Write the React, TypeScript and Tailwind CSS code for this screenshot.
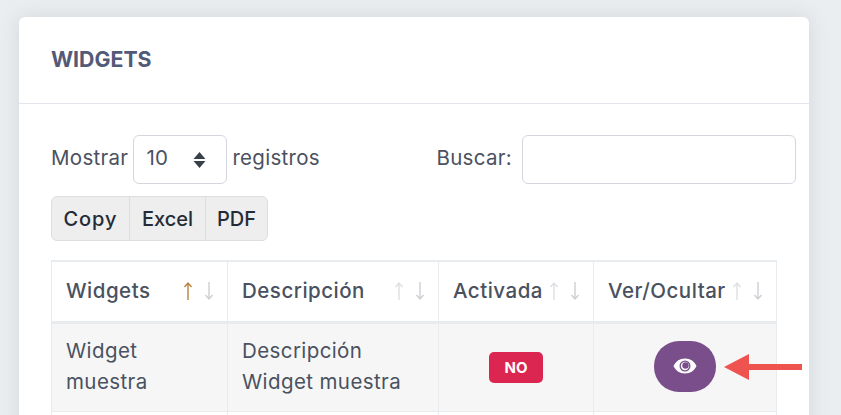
const SortArrows = ({ active = false }: { active?: boolean }) => (
  <span className="flex items-center gap-[11px] shrink-0">
    <svg width="10" height="20" viewBox="0 0 10 20" fill="none" className={active ? "text-[#b7823f]" : "text-[#dcdfe3]"}>
      <path d="M5 19V2M1.5 6L5 2l3.5 4" stroke="currentColor" strokeWidth="1.4" />
    </svg>
    <svg width="10" height="20" viewBox="0 0 10 20" fill="none" className="text-[#ccd0d5]">
      <path d="M5 1v17M1.5 14L5 18l3.5-4" stroke="currentColor" strokeWidth="1.4" />
    </svg>
  </span>
);

const columns = [
  { label: "Widgets", width: "w-[176px]", active: true },
  { label: "Descripción", width: "w-[211px]" },
  { label: "Activada", width: "w-[155px]" },
  { label: "Ver/Ocultar", width: "w-[183px]" },
];

export default function App() {
  return (
    <div className="h-[415px] w-[841px] overflow-hidden bg-[#ebeef1] pl-[19px] pt-[17px] font-['Inter',sans-serif] text-[#4a5160]">
      <div className="relative h-[420px] w-[790px] rounded-t-md bg-white shadow-[0_0_20px_rgba(150,160,170,0.3)]">
        <div className="flex h-[87px] items-center border-b border-[#e4e5ec] px-8">
          <h2 className="text-[21.3px] font-bold text-[#525a78]">WIDGETS</h2>
        </div>

        <div className="px-8 pt-[31px]">
          <div className="flex h-[49px] items-center justify-between">
            <div className="flex items-center gap-[5px] text-[20.5px] tracking-[0.3px]">
              <span className="mb-[3px]">Mostrar</span>
              <div className="flex h-[49px] w-[94px] items-center justify-between rounded-md border border-[#d3d6dd] pl-[12px] pr-[20px]">
                <span className="mb-[3px]">10</span>
                <svg width="13" height="18" viewBox="0 0 13 18" className="text-[#3a404a]" fill="currentColor">
                  <path d="M6.5 1L12.5 8H.5zM.5 10h12l-6 7z" />
                </svg>
              </div>
              <span className="mb-[3px]">registros</span>
            </div>
            <div className="-mr-[19px] flex items-center gap-[10px] text-[20.5px] tracking-[0.3px]">
              <span className="mb-[3px]">Buscar:</span>
              <div className="h-[49px] w-[274px] rounded-md border border-[#d3d6dd]" />
            </div>
          </div>

          <div className="mt-3 flex h-[45px] w-[217px] overflow-hidden rounded-md border border-[#dcdee1] bg-[#eeeeee] text-[20px] font-medium text-[#252b36]">
            <div className="flex w-[78px] items-center justify-center border-r border-[#dcdee1] tracking-[1px]">Copy</div>
            <div className="flex w-[76px] items-center justify-center border-r border-[#dcdee1]">Excel</div>
            <div className="flex flex-1 items-center justify-center">PDF</div>
          </div>

          <table className="mt-[19px] w-[725px] table-fixed border-collapse border-t-2 border-[#e9ecef] text-[20.5px] tracking-[0.4px]">
            <thead>
              <tr className="h-[61px] border-b-[3px] border-[#e9ecef]">
                {columns.map((col) => (
                  <th key={col.label} className={`${col.width} border-x border-[#e9ecef] pl-[14px] pr-[13px] text-left font-medium tracking-[0.5px]`}>
                    <div className="flex items-center justify-between">
                      <span>{col.label}</span>
                      <SortArrows active={col.active} />
                    </div>
                  </th>
                ))}
              </tr>
            </thead>
            <tbody>
              <tr className="h-[89px] border-b border-[#e9ecef] bg-[#f6f6f6] leading-[31px]">
                <td className="border-x border-[#e9ecef] px-[14px] pb-[2px]">
                  Widget
                  <br />
                  muestra
                </td>
                <td className="border-x border-[#e9ecef] px-[14px] pb-[2px]">
                  Descripción
                  <br />
                  Widget muestra
                </td>
                <td className="border-x border-[#e9ecef] pb-[2px] text-center">
                  <span className="inline-flex h-[31px] w-[54px] items-center justify-center rounded-[5px] bg-[#dc2652] text-[15px] font-bold tracking-normal text-white">NO</span>
                </td>
                <td className="border-x border-[#e9ecef] pb-[2px] text-center">
                  <span className="inline-flex h-[51px] w-[62px] items-center justify-center rounded-[25px] bg-[#7a4e8a] align-middle">
                    <svg width="24" height="16" viewBox="0 0 24 16">
                      <path d="M12 0.500C6.500 0.500 2.500 3.500 0.500 8c2 4.500 6 7.500 11.500 7.500s9.500-3 11.500-7.500C21.500 3.500 17.500 0.500 12 0.500z" fill="#fff" />
                      <circle cx="12" cy="8" r="5.500" fill="#7a4e8a" />
                      <circle cx="12" cy="8" r="4.200" fill="#fff" />
                      <circle cx="12.500" cy="7.500" r="3.200" fill="#7a4e8a" />
                    </svg>
                  </span>
                </td>
              </tr>
              <tr className="h-[40px]">
                <td className="border-x border-[#e9ecef]" />
                <td className="border-x border-[#e9ecef]" />
                <td className="border-x border-[#e9ecef]" />
                <td className="border-x border-[#e9ecef]" />
              </tr>
            </tbody>
          </table>
        </div>

        {/* red annotation arrow over the table */}
        <svg width="80" height="26" viewBox="0 0 80 26" className="absolute left-[705px] top-[337px]">
          <path d="M0 13L25 0v10h53v6H25v10z" fill="#ef5350" />
        </svg>
      </div>
    </div>
  );
}
